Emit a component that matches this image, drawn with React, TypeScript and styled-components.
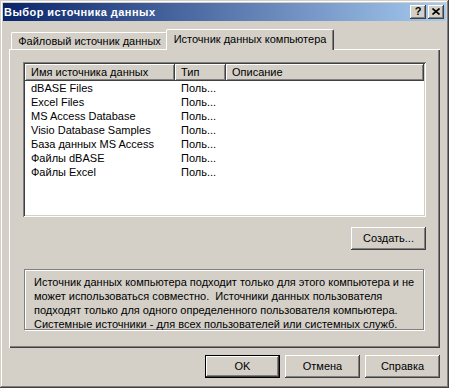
import React from "react";
import styled, { createGlobalStyle } from "styled-components";

const GlobalStyle = createGlobalStyle`
  html, body {
    margin: 0;
    padding: 0;
    background: #d4d0c8;
  }
  body {
    font-family: "Liberation Sans", Arial, sans-serif;
    font-size: 11px;
    color: #000;
  }
`;

const raised = `
  box-shadow: inset -1px -1px #404040, inset 1px 1px #fff,
    inset -2px -2px #808080, inset 2px 2px #d4d0c8;
`;

const Window = styled.div`
  width: 449px;
  height: 388px;
  box-sizing: border-box;
  padding: 3px;
  background: #d4d0c8;
  box-shadow: inset -1px -1px #404040, inset 1px 1px #d4d0c8,
    inset -2px -2px #808080, inset 2px 2px #fff;
  display: flex;
  flex-direction: column;
`;

const Caption = styled.div`
  height: 18px;
  display: flex;
  align-items: center;
  justify-content: space-between;
  padding: 0 2px 0 1px;
  background: linear-gradient(to right, #0a246a, #a6caf0);
`;

const Title = styled.span`
  color: #fff;
  font-weight: bold;
  font-size: 11px;
  letter-spacing: 0.45px;
`;

const CaptionButtons = styled.div`
  display: flex;
  gap: 2px;
`;

const CaptionButton = styled.div`
  width: 16px;
  height: 14px;
  box-sizing: border-box;
  display: flex;
  align-items: center;
  justify-content: center;
  background: #d4d0c8;
  ${raised}
  font-weight: bold;
  font-size: 11px;
  line-height: 1;
  padding-bottom: 1px;
`;

const Body = styled.div`
  padding: 8px 6px 0 6px;
  display: flex;
  flex-direction: column;
`;

const TabStrip = styled.div`
  display: flex;
  align-items: flex-end;
  height: 20px;
  padding-left: 2px;
`;

const Tab = styled.div<{ $active?: boolean; $w: number }>`
  position: relative;
  z-index: ${(p) => (p.$active ? 2 : 1)};
  box-sizing: border-box;
  width: ${(p) => p.$w}px;
  height: ${(p) => (p.$active ? 21 : 17)}px;
  margin-bottom: ${(p) => (p.$active ? -1 : 0)}px;
  margin-left: ${(p) => (p.$active ? -2 : 0)}px;
  padding-bottom: ${(p) => (p.$active ? 2 : 0)}px;
  border-top: 1px solid #fff;
  border-left: 1px solid #fff;
  border-right: 1px solid #404040;
  border-radius: 2px 2px 0 0;
  box-shadow: inset -1px 0 #808080;
  background: #d4d0c8;
  display: flex;
  align-items: center;
  justify-content: center;
  white-space: nowrap;
`;

const Panel = styled.div`
  width: 431px;
  height: 299px;
  box-sizing: border-box;
  padding: 13px 14px 17px 14px;
  box-shadow: inset 1px 1px #fff, inset -1px -1px #404040,
    inset -2px -2px #808080;
  display: flex;
  flex-direction: column;
`;

const ListBox = styled.div`
  height: 155px;
  box-sizing: border-box;
  padding: 2px;
  background: #fff;
  box-shadow: inset 1px 1px #808080, inset -1px -1px #fff,
    inset 2px 2px #404040, inset -2px -2px #d4d0c8;
  display: flex;
  flex-direction: column;
  overflow: hidden;
`;

const HeaderRow = styled.div`
  display: flex;
  height: 17px;
  flex-shrink: 0;
`;

const HeaderCell = styled.div<{ $w?: number }>`
  box-sizing: border-box;
  ${(p) => (p.$w ? `width: ${p.$w}px;` : "flex: 1;")}
  height: 17px;
  padding: 0 0 1px 6px;
  background: #d4d0c8;
  box-shadow: inset -1px -1px #404040, inset 1px 1px #fff,
    inset -2px -2px #808080;
  display: flex;
  align-items: center;
  white-space: nowrap;
`;

const Row = styled.div`
  display: flex;
  height: 14px;
  line-height: 14px;
`;

const Cell = styled.div<{ $w: number }>`
  width: ${(p) => p.$w}px;
  box-sizing: border-box;
  padding-left: 6px;
  white-space: nowrap;
  overflow: hidden;
`;

const CreateRow = styled.div`
  display: flex;
  justify-content: flex-end;
  margin-top: 10px;
`;

const Button = styled.button<{ $default?: boolean }>`
  width: 75px;
  height: 23px;
  box-sizing: border-box;
  margin: 0;
  padding: 0 0 1px 0;
  font-family: "Liberation Sans", Arial, sans-serif;
  font-size: 11px;
  color: #000;
  background: #d4d0c8;
  border: ${(p) => (p.$default ? "1px solid #000" : "none")};
  ${raised}
  cursor: default;
  u {
    text-decoration: underline;
    text-underline-offset: 1px;
  }
`;

const InfoBox = styled.div`
  margin: 19px 2px 0 1px;
  height: 61px;
  box-sizing: border-box;
  padding: 5px 9px 0 9px;
  border: 1px solid #808080;
  box-shadow: inset 1px 1px #fff, 1px 1px #fff;
  line-height: 14px;
  white-space: nowrap;
`;

const ButtonRow = styled.div`
  width: 431px;
  display: flex;
  justify-content: flex-end;
  gap: 5px;
  margin-top: 7px;
`;

const sources = [
  "dBASE Files",
  "Excel Files",
  "MS Access Database",
  "Visio Database Samples",
  "База данных MS Access",
  "Файлы dBASE",
  "Файлы Excel",
];

export default function App() {
  return (
    <>
      <GlobalStyle />
      <Window>
        <Caption>
          <Title>Выбор источника данных</Title>
          <CaptionButtons>
            <CaptionButton>?</CaptionButton>
            <CaptionButton>
              <svg width="8" height="7" viewBox="0 0 8 7">
                <path
                  d="M0.5 0.5 L7.5 6.5 M7.5 0.5 L0.5 6.5"
                  stroke="#000"
                  strokeWidth="1.6"
                  fill="none"
                />
              </svg>
            </CaptionButton>
          </CaptionButtons>
        </Caption>
        <Body>
          <TabStrip>
            <Tab $w={157}>Файловый источник данных</Tab>
            <Tab $active $w={168}>
              Источник данных компьютера
            </Tab>
          </TabStrip>
          <Panel>
            <ListBox>
              <HeaderRow>
                <HeaderCell $w={150}>Имя источника данных</HeaderCell>
                <HeaderCell $w={51}>Тип</HeaderCell>
                <HeaderCell>Описание</HeaderCell>
              </HeaderRow>
              {sources.map((s) => (
                <Row key={s}>
                  <Cell $w={150}>{s}</Cell>
                  <Cell $w={51}>Поль...</Cell>
                </Row>
              ))}
            </ListBox>
            <CreateRow>
              <Button>
                Соз<u>д</u>ать...
              </Button>
            </CreateRow>
            <InfoBox>
              Источник данных компьютера подходит только для этого компьютера и не
              <br />
              может использоваться совместно.&nbsp; Источники данных пользователя
              <br />
              подходят только для одного определенного пользователя компьютера.
              <br />
              Системные источники - для всех пользователей или системных служб.
            </InfoBox>
          </Panel>
          <ButtonRow>
            <Button $default>OK</Button>
            <Button>Отмена</Button>
            <Button>Справка</Button>
          </ButtonRow>
        </Body>
      </Window>
    </>
  );
}
